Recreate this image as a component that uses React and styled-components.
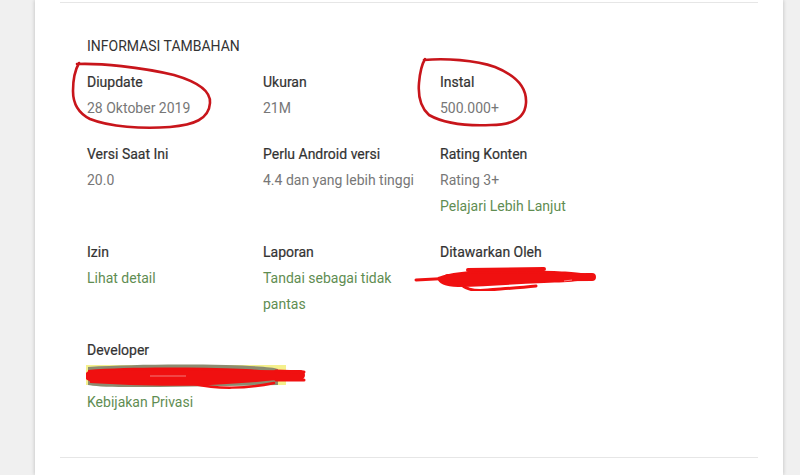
import React from "react";
import styled, { createGlobalStyle } from "styled-components";

const GlobalStyle = createGlobalStyle`
  html, body {
    margin: 0;
    padding: 0;
    background: #f0f0f0;
  }
  body {
    font-family: Roboto, "Liberation Sans", Arial, sans-serif;
  }
`;

const rows = [
  [
    { label: "Diupdate", values: [{ text: "28 Oktober 2019" }], mark: "circleA" },
    { label: "Ukuran", values: [{ text: "21M" }] },
    { label: "Instal", values: [{ text: "500.000+" }], mark: "circleB" },
  ],
  [
    { label: "Versi Saat Ini", values: [{ text: "20.0" }] },
    {
      label: "Perlu Android versi",
      values: [{ text: "4.4 dan yang lebih tinggi" }],
    },
    {
      label: "Rating Konten",
      values: [
        { text: "Rating 3+" },
        { text: "Pelajari Lebih Lanjut", link: true },
      ],
    },
  ],
  [
    { label: "Izin", values: [{ text: "Lihat detail", link: true }] },
    {
      label: "Laporan",
      values: [{ text: "Tandai sebagai tidak pantas", link: true }],
    },
    { label: "Ditawarkan Oleh", values: [{ redact: "seller" }] },
  ],
  [
    {
      label: "Developer",
      values: [
        { redact: "developer" },
        { text: "Kebijakan Privasi", link: true },
      ],
    },
  ],
];

function CircleA() {
  return (
    <Annotation width="146" height="72" viewBox="0 0 146 72" left={-17} top={-8}>
      <path
        d="M7 3 C30 2 70 6 104 14 C128 21 141 30 140 42 C139 58 124 64 100 66 C72 68 40 66 20 58 C8 52 3 42 3 30 C3 18 5 9 9 2"
        fill="none"
        stroke="#c8151b"
        strokeWidth="2.6"
        strokeLinecap="round"
      />
    </Annotation>
  );
}

function CircleB() {
  return (
    <Annotation width="118" height="74" viewBox="0 0 118 74" left={-25} top={-12}>
      <path
        d="M9 3 C30 1 60 3 80 10 C100 18 112 30 111 46 C110 62 96 68 76 68 C54 69 30 67 14 58 C5 50 3 38 4 26 C5 14 7 7 10 2"
        fill="none"
        stroke="#c8151b"
        strokeWidth="2.6"
        strokeLinecap="round"
      />
    </Annotation>
  );
}

function SellerRedaction() {
  return (
    <RedactLine width="190" height="26" viewBox="0 0 190 26" shift={-26}>
      <path d="M2 15 L40 13" stroke="#ee1111" strokeWidth="3" strokeLinecap="round" />
      <path
        d="M24 12 C44 4 90 4 140 6 C162 7 172 8 177 11 C174 16 160 17 130 18 C100 19 70 22 44 22 C30 22 22 17 24 12 Z"
        fill="#f01010"
      />
      <path d="M54 5 L130 4" stroke="#f01010" strokeWidth="4" strokeLinecap="round" />
      <path d="M34 13 L178 12" stroke="#f01010" strokeWidth="8" strokeLinecap="round" />
      <path
        d="M48 20 C54 26 64 26 74 25 C86 24 104 23 122 21"
        fill="none"
        stroke="#f01010"
        strokeWidth="3"
        strokeLinecap="round"
      />
      <path d="M150 16 L158 15" stroke="#ff8a8a" strokeWidth="1" />
    </RedactLine>
  );
}

function DeveloperRedaction() {
  return (
    <RedactLine width="224" height="26" viewBox="0 0 224 26" shift={-1}>
      <rect x="0" y="2" width="200" height="20" fill="#f4f08c" />
      <path
        d="M2 4 C40 2 80 1 140 2 C170 3 188 4 192 6 L192 22 C150 23 90 24 40 24 C20 24 6 23 2 22 Z"
        fill="#8c8c70"
      />
      <path
        d="M2 7 C40 4 100 4 160 6 C190 8 210 10 216 13 C196 17 166 20 124 22 C84 24 40 22 4 20 Z"
        fill="#f01010"
      />
      <path d="M4 13 L214 12" stroke="#f01010" strokeWidth="10" strokeLinecap="round" />
      <path d="M190 8 L218 9" stroke="#f01010" strokeWidth="3" strokeLinecap="round" />
      <path d="M190 17 L218 17" stroke="#f01010" strokeWidth="3" strokeLinecap="round" />
      <path
        d="M108 21 C130 26 160 26 188 20"
        fill="none"
        stroke="#f01010"
        strokeWidth="2.5"
        strokeLinecap="round"
      />
      <path d="M64 13 L100 13" stroke="#f27b7b" strokeWidth="1" />
    </RedactLine>
  );
}

function Value({ value }) {
  if (value.redact === "seller") return <SellerRedaction />;
  if (value.redact === "developer") return <DeveloperRedaction />;
  return <ValueText link={value.link}>{value.text}</ValueText>;
}

export default function App() {
  return (
    <>
      <GlobalStyle />
      <Page>
        <Card>
          <Divider />
          <Section>
            <Title>Informasi Tambahan</Title>
            <Grid>
              {rows.flat().map((cell) => (
                <Cell key={cell.label}>
                  {cell.mark === "circleA" && <CircleA />}
                  {cell.mark === "circleB" && <CircleB />}
                  <Label>{cell.label}</Label>
                  {cell.values.map((v, i) => (
                    <Value key={i} value={v} />
                  ))}
                </Cell>
              ))}
            </Grid>
          </Section>
          <Divider />
        </Card>
      </Page>
    </>
  );
}

const Page = styled.div`
  width: 800px;
  height: 475px;
  overflow: hidden;
  box-sizing: border-box;
  padding: 0 17px 0 35px;
  display: flex;
`;

const Card = styled.div`
  flex: 1;
  background: #ffffff;
  box-shadow: 0 0 4px rgba(0, 0, 0, 0.22);
  padding: 2px 25px 0;
  display: flex;
  flex-direction: column;
`;

const Divider = styled.div`
  height: 1px;
  background: #e6e6e6;
  flex-shrink: 0;
`;

const Section = styled.div`
  padding: 30px 0 42px 27px;
`;

const Title = styled.h2`
  margin: 0 0 10px;
  font-size: 14px;
  font-weight: 400;
  line-height: 26px;
  color: #333333;
  text-transform: uppercase;
`;

const Grid = styled.div`
  display: grid;
  grid-template-columns: 176px 177px 1fr;
  row-gap: 20px;
`;

const Cell = styled.div`
  position: relative;
  display: flex;
  flex-direction: column;
  max-width: 160px;
`;

const Annotation = styled.svg`
  position: absolute;
  left: ${({ left }) => left}px;
  top: ${({ top }) => top}px;
  pointer-events: none;
`;

const Label = styled.div`
  font-size: 14px;
  font-weight: 400;
  line-height: 26px;
  color: #333333;
  -webkit-text-stroke: 0.2px #333333;
  white-space: nowrap;
`;

const ValueText = styled.div`
  font-size: 14px;
  line-height: 26px;
  color: ${({ link }) => (link ? "#5f8d52" : "#777777")};
`;

const RedactLine = styled.svg`
  display: block;
  margin-left: ${({ shift }) => shift}px;
`;
